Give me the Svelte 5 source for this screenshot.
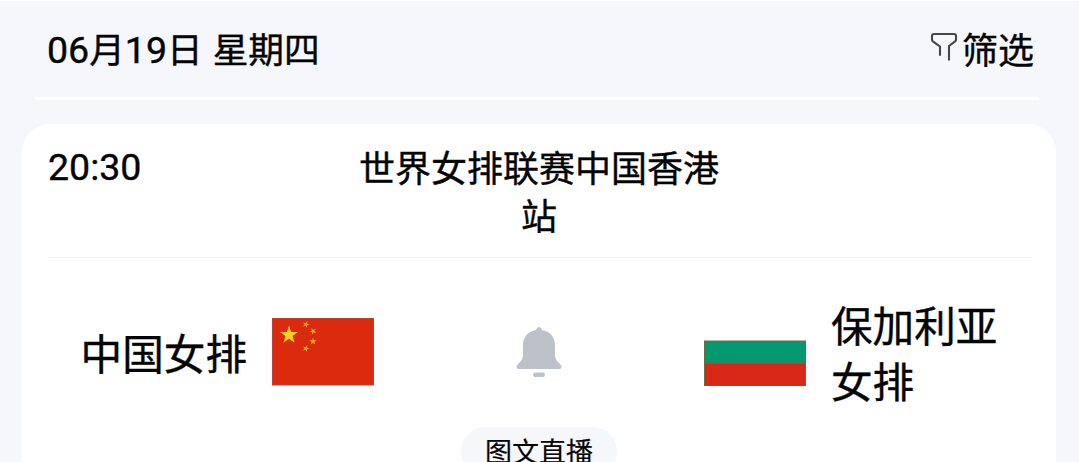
<script>
    let filterLabel = '筛选'

    let match = {
        time: '20:30',
        title: '世界女排联赛中国香港站',
        home: '中国女排',
        away: '保加利亚女排',
        live: '图文直播'
    }

    // small stars of the chinese flag: x, y, rotation
    const stars = [
        [34, 6.5, 20],
        [41, 13.3, 45],
        [41, 23.5, 0],
        [34, 30.5, 20]
    ]
    const star = 'M0-1 .2245-.309 .951-.309 .363.118 .588.809 0 .382-.588.809-.363.118-.951-.309-.2245-.309Z'
</script>

<div class="page">
    <header class="day">
        <h2><span class="num">06</span>月<span class="num">19</span>日<span class="gap">&nbsp;</span>星期四</h2>
        <div class="filter">
            <svg width="28" height="30" viewBox="0 0 28 30" fill="none" stroke="#45474c" stroke-width="2.1">
                <path d="M10 23.8V14.5L3.2 9.7Q2 8.8 2 7.4V4Q2 2 4 2H24Q26 2 26 4V7.4Q26 8.8 24.8 9.7L19 14V28.5" />
            </svg>
            <span>{filterLabel}</span>
        </div>
    </header>

    <section class="card">
        <div class="card-title">
            <span class="num">{match.time}</span>
            <h3>{match.title}</h3>
        </div>
        <div class="teams">
            <div class="team home">
                <span>{match.home}</span>
                <svg class="flag" width="102" height="68" viewBox="0 0 102 68">
                    <rect width="102" height="67.5" fill="#b5453b" />
                    <rect x="1" y="1" width="100" height="65.5" fill="#dc2a0e" />
                    <path d={star} transform="translate(17 17) scale(9.5)" fill="#fdd01d" />
                    {#each stars as [x, y, r]}
                        <path d={star} transform="translate({x} {y}) rotate({r}) scale(3.7)" fill="#f5a62c" />
                    {/each}
                </svg>
            </div>
            <svg class="bell" width="46" height="51" viewBox="0 -1 46 51" fill="#bdc2c9">
                <path d="M20 3Q21 0 23 0Q25 0 26 3C34 4.5 39 10 39 18V27C39 32 41 34.5 44 37Q46 39 45.5 40.5Q45 42 43 42H3Q1 42 .5 40.5Q0 39 2 37C5 34.5 7 32 7 27V18C7 10 12 4.5 20 3Z" />
                <rect x="17" y="45.5" width="12" height="4.5" rx="2.2" />
            </svg>
            <div class="team away">
                <svg class="flag" width="102" height="68" viewBox="0 0 102 68">
                    <rect y="22.5" width="102" height="46" fill="#6b6b45" />
                    <rect x="1" y="23.5" width="100" height="21" fill="#03996e" />
                    <rect x="1" y="45.8" width="100" height="21.7" fill="#d92817" />
                </svg>
                <span>{match.away}</span>
            </div>
        </div>
        <div class="live">{match.live}</div>
    </section>
</div>

<style>
    :global(body){
        background: #f5f7fb;
    }
    .page{
        box-sizing: border-box;
        height: 462px;
        overflow: hidden;
        border-top: 1px solid #fdfdfe;
        padding: 0 23px 0 22px;
        font-family: "Noto Sans CJK SC", sans-serif;
        font-size: 36px;
        line-height: 48px;
        color: #050505;
        -webkit-text-stroke: .4px #050505;
    }
    h2, h3{
        margin: 0;
        font-size: 36px;
        font-weight: 400;
    }
    h2{
        font-size: 35.7px;
    }
    .num{
        font-family: Roboto, sans-serif;
        font-size: 37.5px;
    }
    .gap{
        display: inline-block;
        width: 10px;
    }
    .day{
        display: flex;
        justify-content: space-between;
        height: 73px;
        margin: 0 17px 0 13px;
        padding: 23px 5px 0 12px;
        border-bottom: 3px solid #fff;
    }
    .filter{
        display: flex;
        gap: 4px;
    }
    .filter svg{
        margin-top: 8px;
    }
    .card{
        margin-top: 24px;
        height: 380px;
        border-radius: 28px;
        background: #fff;
        padding: 0 25px;
    }
    .card-title{
        display: grid;
        grid-template-columns: 1fr 364px 1fr;
        height: 115px;
        padding-top: 18px;
        border-bottom: 1px solid #f5f5f6;
    }
    .card-title .num{
        padding: 1px 0 0 1px;
    }
    .card-title h3{
        text-align: center;
    }
    .teams{
        display: grid;
        grid-template-columns: 327px 1fr 327px;
        align-items: center;
        height: 169px;
        padding-top: 18px;
        box-sizing: border-box;
        font-size: 41.6px;
        line-height: 56px;
    }
    .team{
        display: flex;
        align-items: center;
        gap: 25px;
    }
    .home{
        justify-content: flex-end;
    }
    .away span{
        width: 170px;
    }
    .flag{
        flex: none;
    }
    .bell{
        justify-self: center;
    }
    .live{
        width: 156px;
        height: 48px;
        margin: 0 auto;
        border-radius: 24px;
        background: #f5f7fa;
        text-align: center;
        font-size: 27px;
        -webkit-text-stroke-width: .2px;
    }
</style>
